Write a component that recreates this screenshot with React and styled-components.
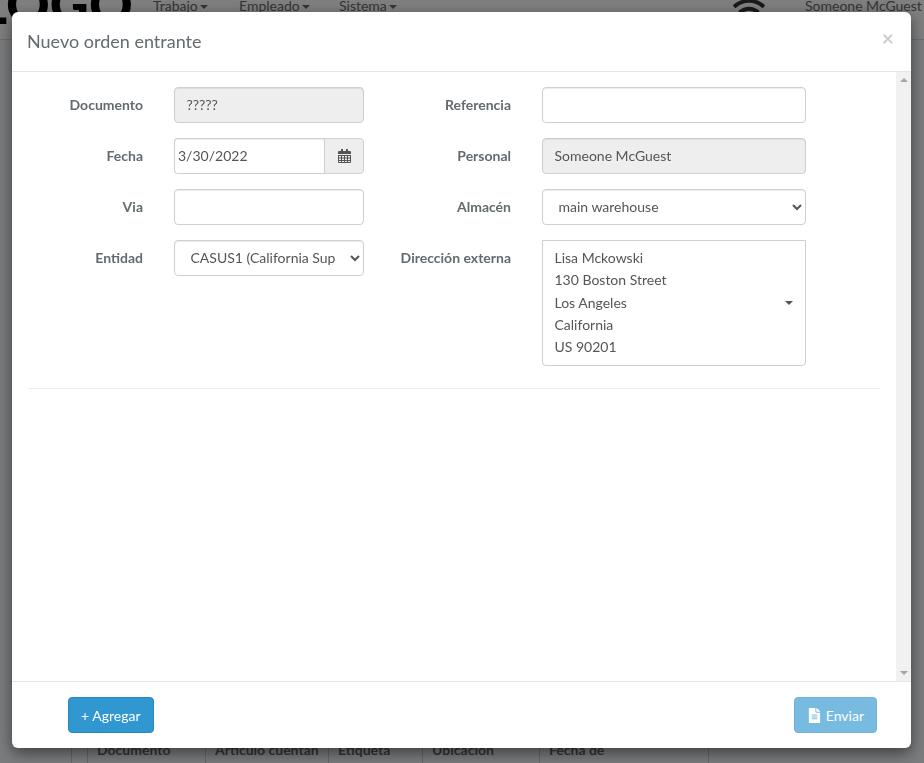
import React from 'react';
import styled, { createGlobalStyle } from 'styled-components';
import { FaFileAlt, FaWifi } from 'react-icons/fa';

const GlobalStyle = createGlobalStyle`
  html, body {
    margin: 0;
    padding: 0;
    height: 763px;
    overflow: hidden;
    background-color: #f5f8fa;
    font-family: Lato, "Liberation Sans", sans-serif;
    font-size: 14px;
    color: #636b6f;
  }
  * {
    box-sizing: border-box;
  }
`;

const Page = styled.div`
  height: 763px;
  overflow: hidden;
`;

const Navbar = styled.nav`
  display: flex;
  height: 40px;
  align-items: flex-start;
  background-color: #fff;
  border-bottom: 1px solid #d3e0e9;
`;

const Logo = styled.div`
  width: 174px;
  margin-left: -21px;
  margin-top: -23px;
  flex-shrink: 0;
  font-size: 54px;
  line-height: 54px;
  font-weight: 900;
  color: #000;
  white-space: nowrap;
`;

const NavLink = styled.span`
  width: ${({ $width }) => $width}px;
  flex-shrink: 0;
  margin-top: -5px;
  line-height: 22px;
  white-space: nowrap;
`;

const Caret = styled.i`
  display: inline-block;
  margin-left: 2px;
  vertical-align: middle;
  border-top: 4px solid;
  border-left: 4px solid transparent;
  border-right: 4px solid transparent;
`;

const WifiBox = styled.div`
  width: 72px;
  flex-shrink: 0;
  margin-top: -6px;
  color: #333;
  font-size: 32px;
  line-height: 32px;
`;

const HeaderRow = styled.div`
  display: flex;
  margin-top: 699px;
  margin-left: 71px;
`;

const HeaderCell = styled.div`
  width: ${({ $width }) => $width}px;
  flex-shrink: 0;
  height: 40px;
  padding-left: 9px;
  border-left: 1px solid #ccc;
  font-weight: 700;
  line-height: 21px;
  color: #636b6f;
  white-space: nowrap;
  overflow: hidden;
`;

const Backdrop = styled.div`
  position: fixed;
  inset: 0;
  background-color: rgba(0, 0, 0, 0.5);
`;

const Modal = styled.div`
  position: absolute;
  top: 12px;
  left: 12px;
  width: 899px;
  height: 736px;
  display: flex;
  flex-direction: column;
  background-color: #fff;
  border-radius: 6px;
  box-shadow: 0 5px 15px rgba(0, 0, 0, 0.5);
`;

const ModalHeader = styled.header`
  display: flex;
  height: 60px;
  flex-shrink: 0;
  justify-content: space-between;
  padding: 17px 17px 0 15px;
  border-bottom: 1px solid #e5e5e5;
`;

const ModalTitle = styled.h4`
  margin: 0;
  font-size: 18px;
  font-weight: 400;
  line-height: 25px;
  color: #636b6f;
`;

const CloseButton = styled.button`
  height: 21px;
  margin-top: -2px;
  padding: 0;
  border: 0;
  background: none;
  font-family: inherit;
  font-size: 21px;
  font-weight: 700;
  line-height: 21px;
  color: #000;
  opacity: 0.2;
`;

const ModalMiddle = styled.div`
  display: flex;
  flex: 1;
  min-height: 0;
`;

const ModalBody = styled.div`
  flex: 1;
  padding: 15px 16px 0 16px;
`;

const FormGrid = styled.div`
  display: grid;
  grid-template-columns: 146px 190px 178px 264px;
  grid-auto-rows: minmax(36px, auto);
  row-gap: 15px;
`;

const Label = styled.label`
  padding-right: 31px;
  padding-top: 7px;
  font-weight: 700;
  line-height: 22px;
  text-align: right;
  white-space: nowrap;
`;

const Input = styled.input`
  display: block;
  width: 100%;
  height: 36px;
  padding: 5px 11.5px 7px;
  border: 1px solid #ccd0d2;
  border-radius: 4px;
  background-color: ${({ readOnly }) => (readOnly ? '#eeeeee' : '#fff')};
  box-shadow: inset 0 1px 1px rgba(0, 0, 0, 0.075);
  font-family: inherit;
  font-size: 14px;
  color: #555;
  outline: none;
`;

const InputGroup = styled.div`
  display: flex;
  height: 36px;
`;

const DateInput = styled.input`
  flex: 1;
  min-width: 0;
  padding: 5px 3px 7px;
  border: 1px solid #ccd0d2;
  border-right: 0;
  border-radius: 4px 0 0 4px;
  box-shadow: inset 0 1px 1px rgba(0, 0, 0, 0.075);
  font-family: inherit;
  font-size: 14px;
  color: #555;
  outline: none;
`;

const Addon = styled.span`
  display: flex;
  width: 40px;
  align-items: center;
  justify-content: center;
  border: 1px solid #ccd0d2;
  border-radius: 0 4px 4px 0;
  background-color: #eeeeee;
  color: #555;
`;

const Select = styled.select`
  display: block;
  width: 100%;
  height: 36px;
  padding: 5px 11.5px 7px;
  border: 1px solid #ccd0d2;
  border-radius: 4px;
  background-color: #fff;
  box-shadow: inset 0 1px 1px rgba(0, 0, 0, 0.075);
  font-family: inherit;
  font-size: 14px;
  color: #555;
  outline: none;
`;

const AddressBox = styled.div`
  position: relative;
  height: 126px;
  padding: 6px 11.5px;
  border: 1px solid #ccd0d2;
  border-radius: 0 0 4px 4px;
  line-height: 22.25px;
  color: #555;
`;

const AddressCaret = styled.i`
  position: absolute;
  top: 60px;
  right: 12px;
  border-top: 4px solid #555;
  border-left: 4px solid transparent;
  border-right: 4px solid transparent;
`;

const Divider = styled.hr`
  margin: 22px 0 0 0;
  border: 0;
  border-top: 1px solid #eeeeee;
`;

const ScrollTrack = styled.div`
  display: flex;
  width: 15px;
  flex-shrink: 0;
  flex-direction: column;
  justify-content: space-between;
  align-items: center;
  padding: 6px 0;
  background-color: #f1f1f1;
`;

const ScrollArrow = styled.i`
  border-left: 4px solid transparent;
  border-right: 4px solid transparent;
  ${({ $down }) => ($down ? 'border-top: 4px solid #a3a3a3;' : 'border-bottom: 4px solid #a3a3a3;')}
`;

const ModalFooter = styled.footer`
  display: flex;
  height: 67px;
  flex-shrink: 0;
  justify-content: space-between;
  padding: 15px 34px 0 56px;
  border-top: 1px solid #e5e5e5;
`;

const Button = styled.button`
  display: flex;
  height: 36px;
  align-items: center;
  gap: 4px;
  padding: 0 12px;
  border: 1px solid #2a88bd;
  border-radius: 4px;
  background-color: #3097d1;
  font-family: inherit;
  font-size: 14px;
  color: #fff;
  opacity: ${({ disabled }) => (disabled ? 0.65 : 1)};
`;

const CalendarIcon = () => (
  <svg width="13" height="14" viewBox="0 0 13 14" fill="currentColor">
    <rect x="3" y="0" width="2" height="3" />
    <rect x="8" y="0" width="2" height="3" />
    <path d="M1 2h11a1 1 0 0 1 1 1v2H0V3a1 1 0 0 1 1-1z" />
    <path fillRule="evenodd" d="M0 6h13v7a1 1 0 0 1-1 1H1a1 1 0 0 1-1-1zM1 7v1.5h2V7zm3 0v1.5h2V7zm3 0v1.5h2V7zm3 0v1.5h2V7zM1 9.5V11h2V9.5zm3 0V11h2V9.5zm3 0V11h2V9.5zm3 0V11h2V9.5zM1 12v1h2v-1zm3 0v1h2v-1zm3 0v1h2v-1zm3 0v1h2v-1z" />
  </svg>
);

const headerCells = [
  ['', 16],
  ['Documento', 118],
  ['Artículo cuentan', 123],
  ['Etiqueta', 94],
  ['Ubicación', 117],
  ['Fecha de', 169],
  ['', 80],
];

const App = () => (
  <>
    <GlobalStyle />
    <Page>
      <Navbar>
        <Logo>LOGO</Logo>
        <NavLink $width={86}>Trabajo<Caret /></NavLink>
        <NavLink $width={100}>Empleado<Caret /></NavLink>
        <NavLink $width={394}>Sistema<Caret /></NavLink>
        <WifiBox><FaWifi /></WifiBox>
        <NavLink $width={130}>Someone McGuest<Caret /></NavLink>
      </Navbar>
      <HeaderRow>
        {headerCells.map(([text, width], i) => (
          <HeaderCell key={i} $width={width}>{text}</HeaderCell>
        ))}
      </HeaderRow>
    </Page>
    <Backdrop>
      <Modal>
        <ModalHeader>
          <ModalTitle>Nuevo orden entrante</ModalTitle>
          <CloseButton>×</CloseButton>
        </ModalHeader>
        <ModalMiddle>
          <ModalBody>
            <FormGrid>
              <Label>Documento</Label>
              <Input readOnly value="?????" />
              <Label>Referencia</Label>
              <Input />

              <Label>Fecha</Label>
              <InputGroup>
                <DateInput readOnly value="3/30/2022" />
                <Addon><CalendarIcon /></Addon>
              </InputGroup>
              <Label>Personal</Label>
              <Input readOnly value="Someone McGuest" />

              <Label>Via</Label>
              <Input />
              <Label>Almacén</Label>
              <Select defaultValue="main">
                <option value="main">main warehouse</option>
              </Select>

              <Label>Entidad</Label>
              <Select defaultValue="casus1">
                <option value="casus1">CASUS1 (California Supply)</option>
              </Select>
              <Label>Dirección externa</Label>
              <AddressBox>
                Lisa Mckowski<br />
                130 Boston Street<br />
                Los Angeles<br />
                California<br />
                US 90201
                <AddressCaret />
              </AddressBox>
            </FormGrid>
            <Divider />
          </ModalBody>
          <ScrollTrack>
            <ScrollArrow />
            <ScrollArrow $down />
          </ScrollTrack>
        </ModalMiddle>
        <ModalFooter>
          <Button>+ Agregar</Button>
          <Button disabled><FaFileAlt size={15} /> Enviar</Button>
        </ModalFooter>
      </Modal>
    </Backdrop>
  </>
);

export default App;
